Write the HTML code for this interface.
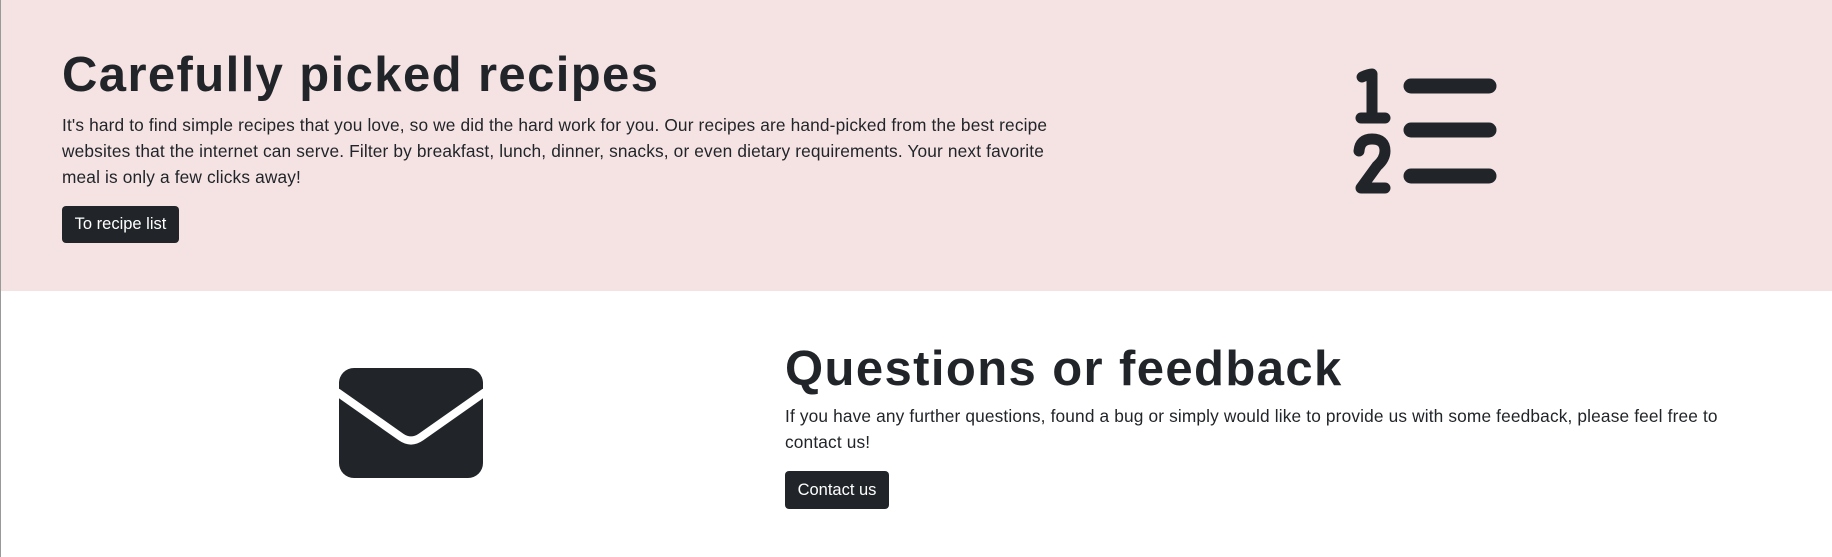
<!DOCTYPE html>
<html><head><meta charset="utf-8"><style>
*{margin:0;padding:0;box-sizing:border-box}
body{width:1832px;height:557px;background:#fff;font-family:"Liberation Sans",sans-serif;color:#212529;position:relative;overflow:hidden;border-left:1px solid #999}
.pink{position:absolute;left:0;top:0;width:1832px;height:291px;background:#f5e3e4}
h1{position:absolute;font-size:49px;font-weight:bold;white-space:nowrap;letter-spacing:1.4px;line-height:1}
p{position:absolute;font-size:17.3px;line-height:25.8px;white-space:nowrap;color:#212529;letter-spacing:0.15px}
.btn{position:absolute;background:#212529;color:#fff;border-radius:4px;font-size:16.5px;display:flex;align-items:center;justify-content:center}
</style></head><body>
<div class="pink"></div>
<h1 style="left:61px;top:51px">Carefully picked recipes</h1>
<p style="left:61px;top:113px">It's hard to find simple recipes that you love, so we did the hard work for you. Our recipes are hand-picked from the best recipe<br>websites that the internet can serve. Filter by breakfast, lunch, dinner, snacks, or even dietary requirements. Your next favorite<br>meal is only a few clicks away!</p>
<div class="btn" style="left:61px;top:206px;width:117px;height:37px">To recipe list</div>
<svg style="position:absolute;left:0;top:0" width="1832" height="557">
<g stroke="#212529" stroke-linecap="round" stroke-linejoin="round" fill="none">
<line x1="1410" y1="86" x2="1488" y2="86" stroke-width="15"/>
<line x1="1410" y1="130" x2="1488" y2="130" stroke-width="15"/>
<line x1="1410" y1="176" x2="1488" y2="176" stroke-width="15"/>
<path d="M1361 77 Q1368 74 1371 74 L1371 117" stroke-width="11"/>
<path d="M1360 118 H1384" stroke-width="11"/>
<path d="M1358 151 Q1359 139 1371 139 Q1384 139 1384 151 Q1384 159 1376 166 L1360 188 H1384" stroke-width="11"/>
</g>
<rect x="338" y="368" width="144" height="110" rx="15" fill="#212529"/>
<path d="M336 392 L400 437 Q410 444 420 437 L484 392" stroke="#fff" stroke-width="8" fill="none" stroke-linejoin="round"/>
</svg>
<h1 style="left:784px;top:345px">Questions or feedback</h1>
<p style="left:784px;top:404px">If you have any further questions, found a bug or simply would like to provide us with some feedback, please feel free to<br>contact us!</p>
<div class="btn" style="left:784px;top:471px;width:104px;height:38px">Contact us</div>
</body></html>
